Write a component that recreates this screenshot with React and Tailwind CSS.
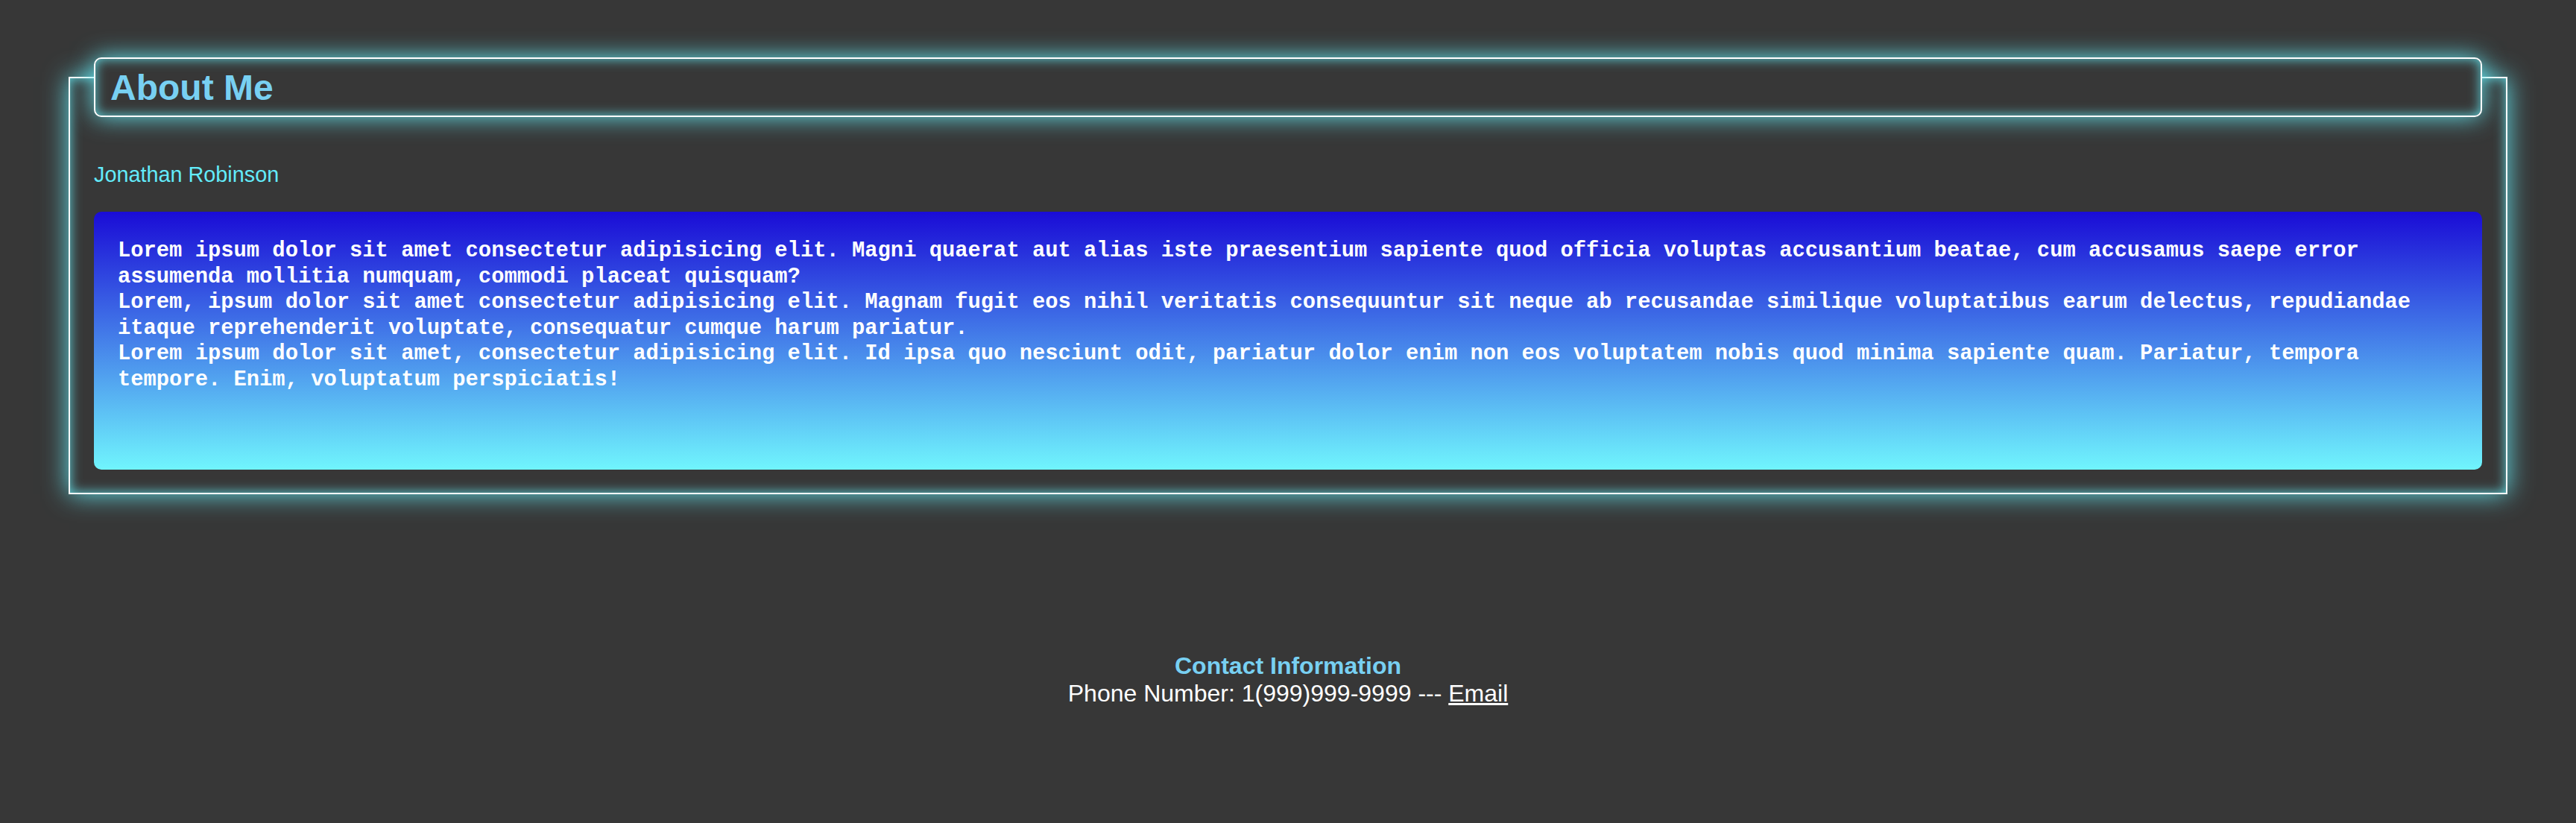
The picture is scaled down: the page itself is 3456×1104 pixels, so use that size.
export default function App() {
  const glow =
    "shadow-[0_0_32px_rgba(100,230,240,0.95),inset_0_0_16px_rgba(100,230,240,0.9)]";
  return (
    <div className="min-h-screen bg-[#373737] pt-[103px] font-['Liberation_Sans',Arial,sans-serif]">
      <section
        className={`mx-[92px] border-2 border-white px-[32px] pb-[31px] ${glow}`}
      >
        <div
          className={`-mt-[28px] flex h-[80px] items-center rounded-[10px] border-2 border-white bg-[#373737] pl-[20px] ${glow}`}
        >
          <h2 className="text-[48px] font-bold leading-[55px] text-[#78d0f2]">
            About Me
          </h2>
        </div>
        <p className="mt-[61px] text-[28.8px] leading-[33px] text-[#63ebfa]">
          Jonathan Robinson
        </p>
        <div className="mt-[33px] h-[346px] rounded-[10px] bg-[linear-gradient(to_bottom,#1a0cd6,#70f5fd)] px-[32px] pt-[36px] font-['Liberation_Mono','Courier_New',monospace] text-[28.8px] font-bold leading-[34.56px] text-white">
          <div>
            Lorem ipsum dolor sit amet consectetur adipisicing elit. Magni
            quaerat aut alias iste praesentium sapiente quod officia voluptas
            accusantium beatae, cum accusamus saepe error assumenda mollitia
            numquam, commodi placeat quisquam?
          </div>
          <div>
            Lorem, ipsum dolor sit amet consectetur adipisicing elit. Magnam
            fugit eos nihil veritatis consequuntur sit neque ab recusandae
            similique voluptatibus earum delectus, repudiandae itaque
            reprehenderit voluptate, consequatur cumque harum pariatur.
          </div>
          <div>
            Lorem ipsum dolor sit amet, consectetur adipisicing elit. Id ipsa
            quo nesciunt odit, pariatur dolor enim non eos voluptatem nobis quod
            minima sapiente quam. Pariatur, tempora tempore. Enim, voluptatum
            perspiciatis!
          </div>
        </div>
      </section>
      <footer className="mt-[212px] text-center text-[32px] leading-[36.8px] text-white">
        <div className="font-bold text-[#78d0f2]">Contact Information</div>
        <div>
          Phone Number: 1(999)999-9999 ---{" "}
          <a href="#" className="underline">
            Email
          </a>
        </div>
      </footer>
    </div>
  );
}
